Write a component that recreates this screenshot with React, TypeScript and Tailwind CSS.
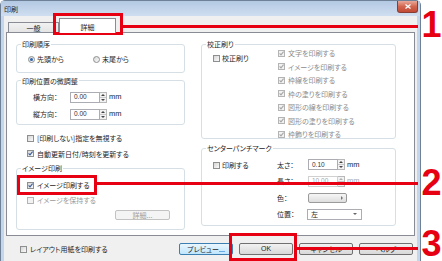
import React from "react";

function CheckBox({ checked = false, disabled = false }: { checked?: boolean; disabled?: boolean }) {
  return (
    <span
      className={`relative w-[7px] h-[7px] shrink-0 border ${
        disabled ? "border-[#b4b4b4] bg-[#f2f2f2]" : "border-[#8e8f8f] bg-gradient-to-br from-[#d6d6d6] to-[#fafafa]"
      }`}
    >
      {checked && (
        <svg viewBox="0 0 5 5" className="absolute inset-0 w-full h-full">
          <path d="M0.6 2.4 L2 3.9 L4.6 0.7" fill="none" stroke={disabled ? "#a6a6a6" : "#3c5a9a"} strokeWidth="1.1" />
        </svg>
      )}
    </span>
  );
}

function Radio({ checked = false }: { checked?: boolean }) {
  return (
    <span className="w-[7px] h-[7px] shrink-0 rounded-full border border-[#8e8f8f] bg-gradient-to-br from-[#d8d8d8] to-[#fafafa] flex items-center justify-center">
      {checked && <span className="w-[3px] h-[3px] rounded-full bg-[#2b64b0]" />}
    </span>
  );
}

function Spin({ value, disabled = false }: { value: string; disabled?: boolean }) {
  const arrow = disabled ? "#b0b0b0" : "#444";
  return (
    <div className="flex items-center h-[11px]">
      <div
        className={`w-[30px] h-full border border-[#abadb3] bg-white pl-[3px] flex items-center font-['Liberation_Sans',sans-serif] text-[6.5px] ${
          disabled ? "text-[#a8a8a8] border-[#d0d0d0]" : "text-[#333]"
        }`}
      >
        {value}
      </div>
      <div className="w-[7px] h-full flex flex-col border border-l-0 border-[#b8b8b8] bg-[#f2f2f2]">
        <span className="flex-1 flex items-center justify-center border-b border-[#c8c8c8]">
          <svg viewBox="0 0 4 2" className="w-[4px] h-[2px]">
            <path d="M0 2 L2 0 L4 2 Z" fill={arrow} />
          </svg>
        </span>
        <span className="flex-1 flex items-center justify-center">
          <svg viewBox="0 0 4 2" className="w-[4px] h-[2px]">
            <path d="M0 0 L4 0 L2 2 Z" fill={arrow} />
          </svg>
        </span>
      </div>
      <span className={`ml-[2px] font-['Liberation_Sans',sans-serif] text-[7.5px] ${disabled ? "text-[#a8a8a8]" : "text-[#222]"}`}>
        mm
      </span>
    </div>
  );
}

function Group({ title, className, children }: { title: string; className: string; children: React.ReactNode }) {
  return (
    <fieldset className={`border border-[#d5dfe5] rounded-[3px] ${className}`}>
      <legend className="ml-[4px] px-[1px] leading-[8px]">{title}</legend>
      {children}
    </fieldset>
  );
}

function Button({ label, className = "" }: { label: string; className?: string }) {
  return (
    <div
      className={`w-[54px] h-[12px] rounded-[2px] border flex items-center justify-center ${className}`}
    >
      {label}
    </div>
  );
}

const proofItems = [
  "文字を印刷する",
  "イメージを印刷する",
  "枠線を印刷する",
  "枠の塗りを印刷する",
  "図形の線を印刷する",
  "図形の塗りを印刷する",
  "枠飾りを印刷する",
];

export default function App() {
  return (
    <div className="relative w-[442px] h-[261px] bg-white overflow-hidden font-['Noto_Sans_CJK_JP',sans-serif] text-[7px] leading-[8px] text-[#1e1e1e] [font-feature-settings:'palt']">
      <div className="w-[421px] h-[263px] flex flex-col border border-[#6f8196] rounded-t-[5px] bg-[#c4d6eb]">
        {/* title bar */}
        <div className="h-[15px] shrink-0 flex items-start bg-gradient-to-b from-[#b3c9e3] to-[#d0def0]">
          <span className="ml-[3px] mt-[4px]">印刷</span>
          <div className="ml-auto mr-[2px] w-[21px] h-[12px] rounded-b-[3px] border border-t-0 border-[#8a3e33] bg-gradient-to-b from-[#e9a89a] via-[#d2654f] to-[#c24a34] flex items-center justify-center">
            <svg viewBox="0 0 6 5" className="w-[6px] h-[5px]">
              <path d="M0.5 0.5 L5.5 4.5 M5.5 0.5 L0.5 4.5" stroke="#fff" strokeWidth="1.3" />
            </svg>
          </div>
        </div>

        {/* client area */}
        <div className="flex-1 mx-[3px] bg-[#f0f0f0] flex flex-col">
          {/* tabs */}
          <div className="h-[16px] shrink-0 flex items-end pl-[4px]">
            <div className="w-[51px] h-[11px] mb-[-1px] border border-b-0 border-[#898c95] bg-gradient-to-b from-[#f2f2f2] to-[#e3e3e3] flex items-center justify-center">
              一般
            </div>
            <div className="relative z-10 w-[57px] h-[15px] mb-[-1px] border border-b-0 border-[#898c95] bg-white flex items-center justify-center pt-[1px]">
              詳細
            </div>
          </div>

          {/* tab pane */}
          <div className="h-[204px] shrink-0 mx-[2px] border border-[#898c95] bg-white flex pt-[7px] pl-[9px] gap-[16px]">
            {/* left column */}
            <div className="w-[169px] flex flex-col">
              <Group title="印刷順序" className="h-[33px]">
                <div className="flex items-center h-[8px] mt-[7px] pl-[11px]">
                  <div className="w-[65px] flex items-center gap-[2px]">
                    <Radio checked />
                    <span>先頭から</span>
                  </div>
                  <div className="flex items-center gap-[2px]">
                    <Radio />
                    <span>末尾から</span>
                  </div>
                </div>
              </Group>

              <Group title="印刷位置の微調整" className="h-[48.5px] mt-[3.5px]">
                <div className="flex flex-col gap-[6px] mt-[7px] pl-[16px]">
                  <div className="flex items-center h-[11px]">
                    <span className="w-[37px]">横方向：</span>
                    <Spin value="0.00" />
                  </div>
                  <div className="flex items-center h-[11px]">
                    <span className="w-[37px]">縦方向：</span>
                    <Spin value="0.00" />
                  </div>
                </div>
              </Group>

              <div className="flex flex-col gap-[7.5px] mt-[9px] pl-[11px]">
                <div className="flex items-center gap-[3px] h-[8px]">
                  <CheckBox />
                  <span>[印刷しない]指定を無視する</span>
                </div>
                <div className="flex items-center gap-[3px] h-[8px]">
                  <CheckBox checked />
                  <span>自動更新日付/時刻を更新する</span>
                </div>
              </div>

              <Group title="イメージ印刷" className="h-[66px] mt-[6.5px] flex flex-col">
                <div className="flex flex-col gap-[7px] mt-[9px] pl-[10px]">
                  <div className="flex items-center gap-[3px] h-[8px]">
                    <CheckBox checked />
                    <span>イメージ印刷する</span>
                  </div>
                  <div className="flex items-center gap-[3px] h-[8px] text-[#9a9a9a]">
                    <CheckBox disabled />
                    <span>イメージを保持する</span>
                  </div>
                </div>
                <div className="self-end mr-[14px] mt-[6px] w-[55px] h-[10px] rounded-[2px] border border-[#c2c2c2] bg-[#f4f4f4] text-[#a0a0a0] flex items-center justify-center">
                  詳細...
                </div>
              </Group>
            </div>

            {/* right column */}
            <div className="w-[195px] flex flex-col">
              <Group title="校正刷り" className="h-[99px] flex">
                <div className="w-[76px] pl-[11px] pt-[6px] flex">
                  <div className="flex items-center gap-[2px] h-[8px]">
                    <CheckBox />
                    <span>校正刷り</span>
                  </div>
                </div>
                <div className="flex flex-col gap-[5.5px] pt-[1px] text-[#8c8c8c]">
                  {proofItems.map((item) => (
                    <div key={item} className="flex items-center gap-[3px] h-[8px]">
                      <CheckBox checked disabled />
                      <span>{item}</span>
                    </div>
                  ))}
                </div>
              </Group>

              <Group title="センターパンチマーク" className="h-[82px] mt-[5px] flex">
                <div className="w-[75px] pl-[11px] pt-[9px] flex">
                  <div className="flex items-center gap-[2px] h-[8px]">
                    <CheckBox />
                    <span>印刷する</span>
                  </div>
                </div>
                <div className="flex flex-col gap-[5.5px] pt-[7px]">
                  <div className="flex items-center h-[11px]">
                    <span className="w-[31px]">太さ：</span>
                    <Spin value="0.10" />
                  </div>
                  <div className="flex items-center h-[11px]">
                    <span className="w-[31px]">長さ：</span>
                    <Spin value="10.00" disabled />
                  </div>
                  <div className="flex items-center h-[11px]">
                    <span className="w-[31px]">色：</span>
                    <div className="w-[39px] h-[10px] rounded-[2px] border border-[#9a9a9a] bg-gradient-to-b from-[#f6f6f6] to-[#dedede] flex items-center justify-end pr-[3px]">
                      <svg viewBox="0 0 2 4" className="w-[2px] h-[4px]">
                        <path d="M0 0 L2 2 L0 4 Z" fill="#777" />
                      </svg>
                    </div>
                  </div>
                  <div className="flex items-center h-[11px]">
                    <span className="w-[30px]">位置：</span>
                    <div className="w-[55px] h-[11px] border border-[#abadb3] bg-white flex items-center pl-[3px] pr-[4px]">
                      <span>左</span>
                      <svg viewBox="0 0 4 2" className="ml-auto w-[4px] h-[2px]">
                        <path d="M0 0 L4 0 L2 2 Z" fill="#666" />
                      </svg>
                    </div>
                  </div>
                </div>
              </Group>
            </div>
          </div>

          {/* bottom row */}
          <div className="flex items-center h-[12px] mt-[7px] pl-[16px] pr-[4px]">
            <div className="flex items-center gap-[3px]">
              <CheckBox />
              <span>レイアウト用紙を印刷する</span>
            </div>
            <div className="ml-auto flex gap-[6px]">
              <Button label="プレビュー..." className="border-[#3c7fb1] bg-gradient-to-b from-[#eaf6fd] to-[#bee6fd]" />
              <Button label="OK" className="border-[#707070] bg-gradient-to-b from-[#f2f2f2] to-[#d8d8d8] font-['Liberation_Sans',sans-serif]" />
              <Button label="キャンセル" className="border-[#707070] bg-gradient-to-b from-[#f2f2f2] to-[#d8d8d8]" />
              <Button label="ヘルプ" className="border-[#707070] bg-gradient-to-b from-[#f2f2f2] to-[#d8d8d8]" />
            </div>
          </div>
        </div>
      </div>

      {/* red annotations */}
      <div className="absolute left-[53px] top-[13px] w-[70px] h-[22px] border-[3px] border-[#e60012]" />
      <div className="absolute left-[123px] top-[25px] w-[295px] h-[3px] bg-[#e60012]" />
      <div className="absolute left-[17px] top-[175px] w-[80px] h-[20px] border-[3px] border-[#e60012]" />
      <div className="absolute left-[97px] top-[182px] w-[321px] h-[3px] bg-[#e60012]" />
      <div className="absolute left-[229px] top-[233px] w-[68px] h-[28px] border-[3px] border-[#e60012]" />
      <div className="absolute left-[297px] top-[247px] w-[121px] h-[3px] bg-[#e60012]" />
      <span className="absolute left-[421px] top-[11px] w-[21px] text-center font-['Liberation_Sans',sans-serif] font-bold text-[36px] leading-[28px] text-[#e60012] [font-feature-settings:normal]">
        1
      </span>
      <span className="absolute left-[421px] top-[169px] w-[21px] text-center font-['Liberation_Sans',sans-serif] font-bold text-[36px] leading-[28px] text-[#e60012] [font-feature-settings:normal]">
        2
      </span>
      <span className="absolute left-[421px] top-[230px] w-[21px] text-center font-['Liberation_Sans',sans-serif] font-bold text-[36px] leading-[28px] text-[#e60012] [font-feature-settings:normal]">
        3
      </span>
    </div>
  );
}
